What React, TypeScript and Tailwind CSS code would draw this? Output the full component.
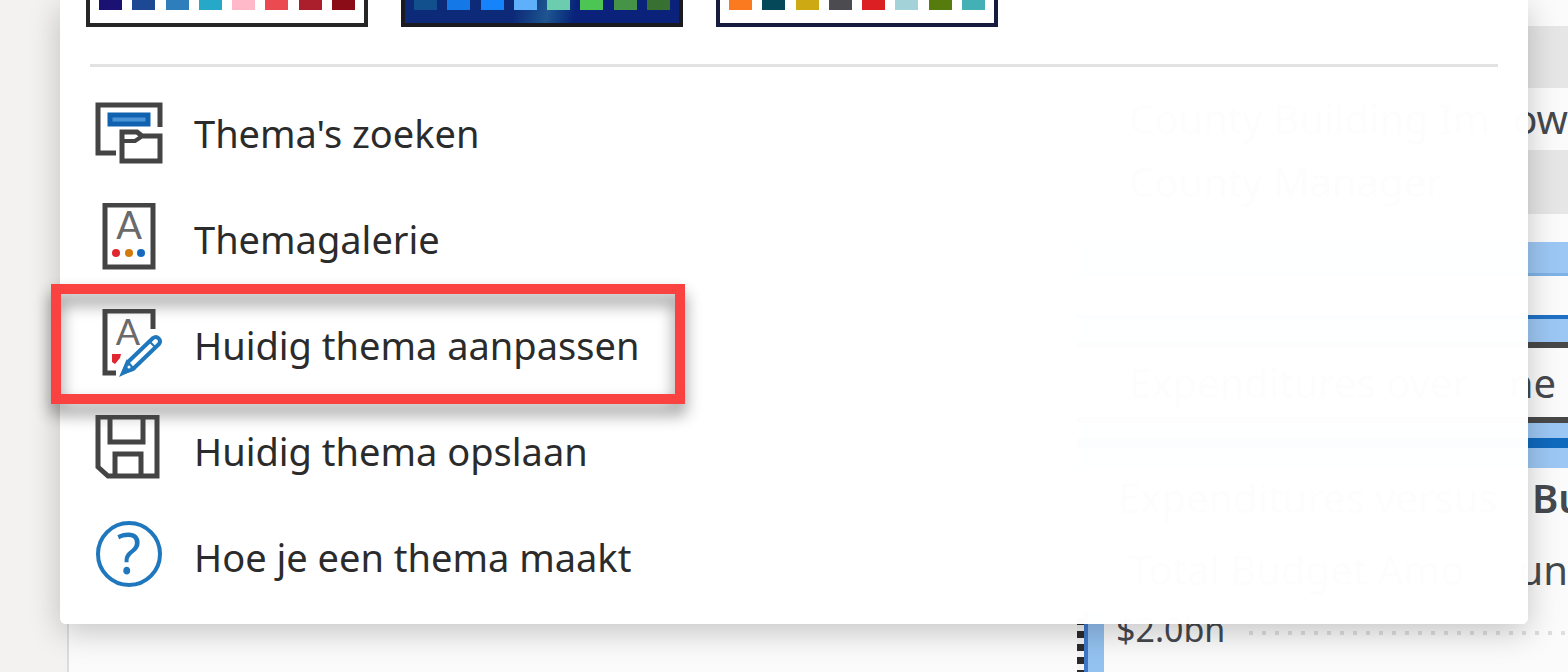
import type { ReactNode } from 'react';

const THEMES = [
  {
    name: 'Thema 1',
    frame: 'border-[#262626] bg-white',
    swatches: ['bg-[#1b1173]', 'bg-[#1d4893]', 'bg-[#2f7ebc]', 'bg-[#26a9c9]', 'bg-[#ffb9c9]', 'bg-[#ea4a50]', 'bg-[#ab1f2d]', 'bg-[#8b0b16]'],
  },
  {
    name: 'Thema 2',
    frame: 'border-[#1b1b1f] bg-linear-100 from-[#0d2a78] from-40% via-[#1f5590] via-52% to-[#0a2279] to-62%',
    swatches: ['bg-[#12508d]', 'bg-[#1479e6]', 'bg-[#1584fa]', 'bg-[#5fb0fb]', 'bg-[#6bcdae]', 'bg-[#4cc554]', 'bg-[#459346]', 'bg-[#377030]'],
  },
  {
    name: 'Thema 3',
    frame: 'border-[#161c3d] bg-white',
    swatches: ['bg-[#fb7a20]', 'bg-[#05485a]', 'bg-[#cdaa14]', 'bg-[#4c4c50]', 'bg-[#dc1f22]', 'bg-[#a3d3d8]', 'bg-[#557c0c]', 'bg-[#43b0b5]'],
  },
];

const DARK = '#444444';
const BLUE = '#1f78bd';

function Icon({ children }: { children: ReactNode }) {
  return (
    <svg className="h-[68px] w-[68px] shrink-0" viewBox="0 0 68 68" fill="none" strokeWidth="5" aria-hidden="true">
      {children}
    </svg>
  );
}

function BrowseIcon() {
  return (
    <Icon>
      <path d="M65 30V8H3v48h18" stroke={DARK} />
      <rect x="15" y="18" width="38" height="9" stroke="#1062b0" fill="#4b93d6" />
      <path d="M27 64V35h15l5 4h18v25z" stroke={DARK} />
      <path d="M26 44h14l6-4" stroke={DARK} strokeWidth="4" />
    </Icon>
  );
}

function GalleryIcon() {
  return (
    <Icon>
      <rect x="10" y="2" width="48" height="62" stroke={DARK} />
      <text x="34" y="36" textAnchor="middle" fontSize="38" fontFamily="Lato, sans-serif" fill="#6a6a6a">
        A
      </text>
      <circle cx="21" cy="50" r="4" fill="#e0262f" />
      <circle cx="34" cy="50" r="4" fill="#d27a0c" />
      <circle cx="46" cy="50" r="4" fill="#1569bf" />
    </Icon>
  );
}

function CustomizeIcon() {
  return (
    <Icon>
      <path d="M58 20V2H10v62h11" stroke={DARK} />
      <text x="33" y="36" textAnchor="middle" fontSize="36" fontFamily="Lato, sans-serif" fill="#6a6a6a">
        A
      </text>
      <path d="M17 45h9l-1 4-5 6-3-2z" fill="#e0262f" />
      <path d="M29 63l4-10 25-24c4-3 9 2 6 6L38 60z" stroke={BLUE} fill="#fff" strokeLinejoin="round" strokeWidth="4" />
      <path d="M32 52l7 8-13 6zM54 32l7 7" stroke={BLUE} strokeWidth="2" fill={BLUE} />
      <circle cx="34" cy="58" r="1.5" fill="#fff" />
    </Icon>
  );
}

function SaveIcon() {
  return (
    <Icon>
      <path d="M3 2h59v59H13L3 52z" stroke={DARK} />
      <path d="M15 2v25h33V2M20 61V39h26v22" stroke={DARK} />
    </Icon>
  );
}

function HelpIcon() {
  return (
    <Icon>
      <circle cx="34" cy="33" r="31" stroke={BLUE} strokeWidth="4" />
      <text x="34" y="53" textAnchor="middle" fontSize="56" fontFamily="'Noto Sans', sans-serif" fill={BLUE}>
        ?
      </text>
    </Icon>
  );
}

const ITEMS = [
  { label: "Thema's zoeken", icon: <BrowseIcon /> },
  { label: 'Themagalerie', icon: <GalleryIcon /> },
  { label: 'Huidig thema aanpassen', icon: <CustomizeIcon />, marked: true },
  { label: 'Huidig thema opslaan', icon: <SaveIcon /> },
  { label: 'Hoe je een thema maakt', icon: <HelpIcon /> },
];

function ReportRow({ className, start = '', end = '' }: { className: string; start?: string; end?: string }) {
  return (
    <div className={`flex items-center whitespace-nowrap ${className}`}>
      <span className="min-w-0 flex-1 pl-[52px]">{start}</span>
      <span className="shrink-0">{end}</span>
    </div>
  );
}

function Report() {
  return (
    <section className="w-[491px] shrink-0 text-[40px] leading-none text-[#45484d]">
      <ReportRow className="mt-[26px] h-[62px] bg-[#e6e6e6]" />
      <ReportRow className="h-[62px]" start="County Building Im" end="ow" />
      <ReportRow className="h-[64px] bg-[#e6e6e6]" start="County Manager" />
      <div className="mt-[28px] h-[34px] border-b-3 border-[#7fb2e6] bg-[#9cc7f4]" />
      <div className="mt-[39px] h-[27px] border-t-4 border-[#1f70c4] bg-[#9cc7f4]" />
      <ReportRow className="h-[81px] border-y-6 border-[#484848] pr-3" start="Expenditures over" end="ne" />
      <div className="h-[45px] border-t-15 border-b-20 border-[#9cc7f4] bg-[#0f69bd]" />
      <div className="flex h-[60px] items-center whitespace-nowrap">
        <span className="min-w-0 flex-1 pl-[41px]">Expenditures versus</span>
        <span className="w-[36px] shrink-0 font-semibold">Bu</span>
      </div>
      <ReportRow className="h-[84px]" start="Total Budget Amo" end="un" />
      <div className="flex h-[60px]">
        <div className="w-[7px] bg-[repeating-linear-gradient(#f4f4f4_0_6px,#2b2b2b_6px_13px)]" />
        <div className="w-5 border-l-4 border-[#3e78c8] bg-[#93c1f0]" />
        <span className="pl-3 text-[34px] leading-none">$2.0bn</span>
        <div className="mt-[19px] ml-6 h-1 flex-1 bg-[repeating-linear-gradient(90deg,#dedede_0_4px,transparent_4px_13px)]" />
      </div>
    </section>
  );
}

export default function App() {
  return (
    <div className="relative flex min-h-screen overflow-hidden bg-[#fbfbfb] font-['Noto_Sans',sans-serif]">
      <aside className="w-[69px] shrink-0 border-r-2 border-[#dcdcdc] bg-[#f3f2f1]" />
      <main className="flex h-screen min-w-0 flex-1 justify-end overflow-hidden">
        <Report />
      </main>

      <div className="absolute top-0 right-[40px] left-[60px] rounded-b-md bg-white/99 pb-4 shadow-[0_8px_32px_rgba(0,0,0,0.22)]">
        <div className="flex gap-[33px] px-[26px]">
          {THEMES.map((theme) => (
            <button
              key={theme.name}
              type="button"
              aria-label={theme.name}
              className={`flex h-[27px] w-[282px] justify-between border-x-4 border-b-4 px-[9px] ${theme.frame}`}
            >
              {theme.swatches.map((swatch) => (
                <span key={swatch} className={`h-[10px] w-[23px] ${swatch}`} />
              ))}
            </button>
          ))}
        </div>
        <hr className="mx-[30px] mt-[37px] mb-[11px] border-t-3 border-[#e2e2e2]" />
        <ul>
          {ITEMS.map((item) => (
            <li key={item.label} className="relative">
              {item.marked && (
                <span className="pointer-events-none absolute -top-[6px] -left-[9px] h-[120px] w-[634px] border-10 border-[#fa4340] drop-shadow-[0_10px_8px_rgba(0,0,0,0.45)]" />
              )}
              <button
                type="button"
                className="relative flex h-[106px] w-full items-center gap-[31px] px-[35px] text-left text-[38px] leading-none text-[#2b2b2b]"
              >
                {item.icon}
                <span className="pt-1">{item.label}</span>
              </button>
            </li>
          ))}
        </ul>
      </div>
    </div>
  );
}
